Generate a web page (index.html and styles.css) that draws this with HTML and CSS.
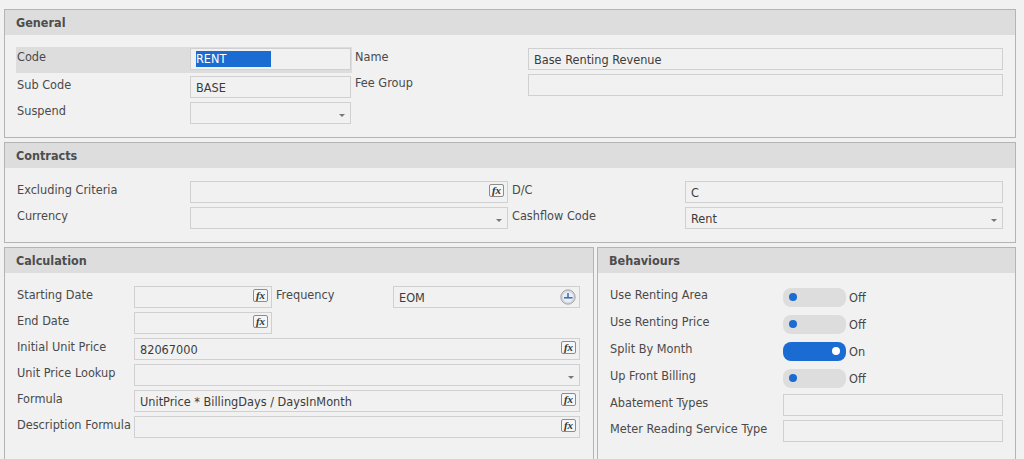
FILE: index.html
```html
<!DOCTYPE html>
<html lang="en">
<head>
    <meta charset="UTF-8">
    <title>Fee Type</title>
    <link rel="stylesheet" href="styles.css">
</head>
<body>
    <div class="panel">
        <div class="panel-header">General</div>
        <div class="panel-body cols">
            <div class="col col-general-left">
                <div class="row row-focus">
                    <label class="lbl lbl-wide">Code</label>
                    <div class="field"><span class="selected">RENT</span></div>
                </div>
                <div class="row">
                    <label class="lbl lbl-wide">Sub Code</label>
                    <div class="field">BASE</div>
                </div>
                <div class="row">
                    <label class="lbl lbl-wide">Suspend</label>
                    <div class="field"><span class="arrow"></span></div>
                </div>
            </div>
            <div class="col col-fill">
                <div class="row">
                    <label class="lbl lbl-wide">Name</label>
                    <div class="field">Base Renting Revenue</div>
                </div>
                <div class="row">
                    <label class="lbl lbl-wide">Fee Group</label>
                    <div class="field"></div>
                </div>
            </div>
        </div>
    </div>

    <div class="panel">
        <div class="panel-header">Contracts</div>
        <div class="panel-body cols">
            <div class="col col-contract-left">
                <div class="row">
                    <label class="lbl lbl-wide">Excluding Criteria</label>
                    <div class="field"><span class="fx">fx</span></div>
                </div>
                <div class="row">
                    <label class="lbl lbl-wide">Currency</label>
                    <div class="field"><span class="arrow"></span></div>
                </div>
            </div>
            <div class="col col-fill">
                <div class="row">
                    <label class="lbl lbl-wide">D/C</label>
                    <div class="field">C</div>
                </div>
                <div class="row">
                    <label class="lbl lbl-wide">Cashflow Code</label>
                    <div class="field">Rent<span class="arrow"></span></div>
                </div>
            </div>
        </div>
    </div>

    <div class="bottom">
        <div class="panel panel-calc">
            <div class="panel-header">Calculation</div>
            <div class="panel-body calc-grid">
                <label class="lbl">Starting Date</label>
                <div class="field"><span class="fx">fx</span></div>
                <label class="lbl lbl-second">Frequency</label>
                <div class="field">EOM
                    <svg class="clock" viewBox="0 0 16 16" width="16" height="16">
                        <circle cx="8" cy="8" r="7.2" fill="#d3d6da" stroke="#a6a6a6"/>
                        <circle cx="8" cy="8" r="5.2" fill="#e9edf5"/>
                        <path d="M8 4v4.5" stroke="#2f5fb5" stroke-width="1.4"/>
                        <path d="M4 8.8h8.5" stroke="#2f5fb5" stroke-width="1.4"/>
                    </svg>
                </div>

                <label class="lbl lbl-first">End Date</label>
                <div class="field"><span class="fx">fx</span></div>

                <label class="lbl lbl-first">Initial Unit Price</label>
                <div class="field span-all">82067000<span class="fx">fx</span></div>

                <label class="lbl">Unit Price Lookup</label>
                <div class="field span-all"><span class="arrow"></span></div>

                <label class="lbl">Formula</label>
                <div class="field span-all">UnitPrice * BillingDays / DaysInMonth<span class="fx">fx</span></div>

                <label class="lbl">Description Formula</label>
                <div class="field span-all"><span class="fx">fx</span></div>
            </div>
        </div>

        <div class="panel panel-behaviours">
            <div class="panel-header">Behaviours</div>
            <div class="panel-body behaviours">
                <div class="row row-toggle">
                    <label class="lbl lbl-wide">Use Renting Area</label>
                    <span class="toggle"><span class="dot"></span></span>
                    <span class="toggle-text">Off</span>
                </div>
                <div class="row row-toggle">
                    <label class="lbl lbl-wide">Use Renting Price</label>
                    <span class="toggle"><span class="dot"></span></span>
                    <span class="toggle-text">Off</span>
                </div>
                <div class="row row-toggle">
                    <label class="lbl lbl-wide">Split By Month</label>
                    <span class="toggle toggle-on"><span class="dot"></span></span>
                    <span class="toggle-text">On</span>
                </div>
                <div class="row row-toggle">
                    <label class="lbl lbl-wide">Up Front Billing</label>
                    <span class="toggle"><span class="dot"></span></span>
                    <span class="toggle-text">Off</span>
                </div>
                <div class="row row-input">
                    <label class="lbl lbl-wide">Abatement Types</label>
                    <div class="field"></div>
                </div>
                <div class="row row-input">
                    <label class="lbl lbl-wide">Meter Reading Service Type</label>
                    <div class="field"></div>
                </div>
            </div>
        </div>
    </div>
</body>
</html>
```

FILE: styles.css
```css
html, body {
    height: 459px;
    overflow: hidden;
}

body {
    margin: 0;
    padding: 9px 8px 0 4px;
    box-sizing: border-box;
    background-color: #f1f1f1;
    font-family: "DejaVu Sans Condensed", "DejaVu Sans", sans-serif;
    font-size: 12.6px;
    color: #444;
}

.panel {
    border: 1px solid #b4b4b4;
    margin-bottom: 4px;
}

.panel-header {
    height: 25px;
    line-height: 26px;
    padding-left: 11px;
    background-color: #dddddd;
    font-weight: bold;
    font-size: 12.5px;
    color: #4d4d4d;
}

.panel-body {
    padding: 13px 12px;
}

.cols {
    display: flex;
}

.col {
    display: flex;
    flex-direction: column;
    gap: 4px;
}

.col-general-left {
    width: 334px;
    margin-right: 4px;
}

.col-contract-left {
    width: 491px;
    margin-right: 4px;
}

.col-fill {
    flex: 1;
}

.row {
    display: flex;
    height: 22px;
}

.row-focus {
    position: relative;
    margin-bottom: 2px;
}

.row-focus::before {
    content: "";
    position: absolute;
    left: -1px;
    right: -1px;
    top: -1px;
    bottom: -3px;
    background-color: #dddddd;
}

.row-focus > * {
    position: relative;
}

.lbl {
    display: block;
    line-height: 18px;
    white-space: nowrap;
    color: #4a4a4a;
}

.lbl-wide {
    width: 173px;
    flex: none;
}

.field {
    position: relative;
    flex: 1;
    box-sizing: border-box;
    height: 22px;
    line-height: 22px;
    padding-left: 5px;
    border: 1px solid #d0d0d0;
    background-color: #f1f1f1;
    color: #3c3c3c;
    white-space: nowrap;
}

.selected {
    display: block;
    width: 75px;
    height: 16px;
    line-height: 16px;
    margin-top: 2px;
    background-color: #1a6bd2;
    color: #fff;
}

.arrow {
    position: absolute;
    right: 5px;
    top: 11px;
    width: 0;
    height: 0;
    border-left: 3px solid transparent;
    border-right: 3px solid transparent;
    border-top: 3px solid #777;
}

.fx {
    position: absolute;
    right: 3px;
    top: 2px;
    box-sizing: border-box;
    width: 15px;
    height: 13px;
    border: 1px solid #8c8c8c;
    border-radius: 2px;
    background-color: #f6f6f6;
    font-family: "Liberation Serif", serif;
    font-style: italic;
    font-weight: bold;
    font-size: 11px;
    line-height: 10px;
    text-align: center;
    color: #333;
}

.clock {
    position: absolute;
    right: 3px;
    top: 2px;
}

.bottom {
    display: flex;
    gap: 3px;
}

.panel-calc {
    width: 590px;
    box-sizing: border-box;
    min-height: 220px;
}

.panel-behaviours {
    flex: 1;
    min-height: 220px;
}

.calc-grid {
    display: grid;
    grid-template-columns: 117px 138px 121px 187px;
    grid-auto-rows: 22px;
    gap: 4px 0;
}

.lbl-second {
    padding-left: 4px;
}

.lbl-first {
    grid-column: 1;
}

.span-all {
    grid-column: 2 / span 3;
}

.behaviours {
    display: flex;
    flex-direction: column;
}

.row-toggle {
    height: 27px;
    align-items: flex-start;
}

.row-input {
    height: 26px;
}

.row-input .field {
    flex: none;
    width: 220px;
}

.toggle {
    position: relative;
    margin-top: 2px;
    width: 63px;
    height: 19px;
    border-radius: 8px;
    background-color: #dddddd;
}

.toggle .dot {
    position: absolute;
    left: 6px;
    top: 5px;
    width: 8px;
    height: 8px;
    border-radius: 50%;
    background-color: #1a6bd2;
}

.toggle-on {
    background-color: #1a6bd2;
}

.toggle-on .dot {
    left: 49px;
    background-color: #fff;
}

.toggle-text {
    margin-left: 3px;
    line-height: 23px;
}
```
